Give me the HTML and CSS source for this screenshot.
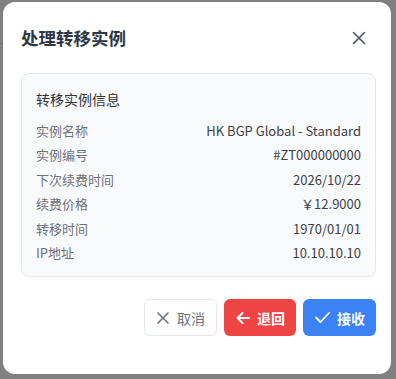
FILE: index.html
```html
<!DOCTYPE html>
<html lang="zh-CN">
<head>
  <meta charset="UTF-8" />
  <title>处理转移实例</title>
  <link rel="stylesheet" href="styles.css">
</head>
<body>
  <div class="backdrop-line"></div>

  <div class="modal">
    <div class="modal-header">
      <h2>处理转移实例</h2>
      <button class="close-btn">
        <svg width="14" height="14" viewBox="0 0 14 14"><path d="M1.5 1.5l11 11M12.5 1.5l-11 11" stroke="currentColor" stroke-width="1.6" stroke-linecap="round"/></svg>
      </button>
    </div>

    <div class="info-card">
      <div class="info-title">转移实例信息</div>
      <div class="info-row"><span class="label">实例名称</span><span class="value">HK BGP Global - Standard</span></div>
      <div class="info-row"><span class="label">实例编号</span><span class="value">#ZT000000000</span></div>
      <div class="info-row"><span class="label">下次续费时间</span><span class="value">2026/10/22</span></div>
      <div class="info-row"><span class="label">续费价格</span><span class="value">￥12.9000</span></div>
      <div class="info-row"><span class="label">转移时间</span><span class="value">1970/01/01</span></div>
      <div class="info-row"><span class="label">IP地址</span><span class="value">10.10.10.10</span></div>
    </div>

    <div class="actions">
      <button class="btn btn-cancel">
        <svg width="12" height="12" viewBox="0 0 12 12"><path d="M1 1l10 10M11 1L1 11" stroke="currentColor" stroke-width="1.6" stroke-linecap="round"/></svg>
        取消
      </button>
      <button class="btn btn-back">
        <svg width="14" height="12" viewBox="0 0 14 12"><path d="M13 6H1.5M6.5 1L1.5 6l5 5" fill="none" stroke="currentColor" stroke-width="2" stroke-linecap="round" stroke-linejoin="round"/></svg>
        退回
      </button>
      <button class="btn btn-accept">
        <svg width="15" height="11" viewBox="0 0 15 11"><path d="M1 5.5l4.5 4.5L14 1" fill="none" stroke="currentColor" stroke-width="1.8" stroke-linecap="round" stroke-linejoin="round"/></svg>
        接收
      </button>
    </div>
  </div>
</body>
</html>
```

FILE: styles.css
```css
body {
  margin: 0;
  padding: 2px 5px 5px 3px;
  background: #808080;
  font-family: "Noto Sans CJK SC", "Noto Sans", sans-serif;
  color: #374151;
}

.backdrop-line {
  position: absolute;
  top: 43px;
  left: 0;
  width: 3px;
  height: 1px;
  background: #6f6f6f;
}

.modal {
  background: #fff;
  border-radius: 12px;
  padding: 22px 15px 38px 18px;
  height: 312px;
}

.modal-header {
  display: flex;
  justify-content: space-between;
  align-items: center;
  height: 28px;
}

.modal-header h2 {
  margin: 0;
  font-size: 17.5px;
  font-weight: 700;
  color: #2d3748;
  line-height: 28px;
}

.close-btn {
  background: none;
  border: none;
  padding: 0;
  margin-right: 10px;
  color: #4b5563;
  display: flex;
  cursor: pointer;
}

.info-card {
  margin-top: 21px;
  background: #f8fafc;
  border: 1px solid #e2e8f0;
  border-radius: 8px;
  padding: 14px 14px 11px;
}

.info-title {
  font-size: 14px;
  line-height: 22px;
  color: #333;
  margin-bottom: 9px;
}

.info-row {
  display: flex;
  justify-content: space-between;
  font-size: 13px;
  line-height: 24.4px;
}

.label {
  color: #71717a;
}

.value {
  color: #3f3f46;
}

.actions {
  margin-top: 22px;
  display: flex;
  justify-content: flex-end;
  gap: 7px;
}

.btn {
  height: 37px;
  display: flex;
  align-items: center;
  gap: 7px;
  padding: 0 10px 0 11px;
  border-radius: 6px;
  font-family: inherit;
  font-size: 14px;
  border: 1px solid transparent;
  cursor: pointer;
}

.btn-cancel {
  background: #fff;
  border-color: #e2e8f0;
  color: #6b7280;
  gap: 8px;
  padding: 0 11px 0 12px;
}

.btn-back {
  background: #ef4444;
  color: #fff;
  font-weight: 700;
}

.btn-accept {
  background: #3b82f6;
  color: #fff;
  font-weight: 700;
}
```
